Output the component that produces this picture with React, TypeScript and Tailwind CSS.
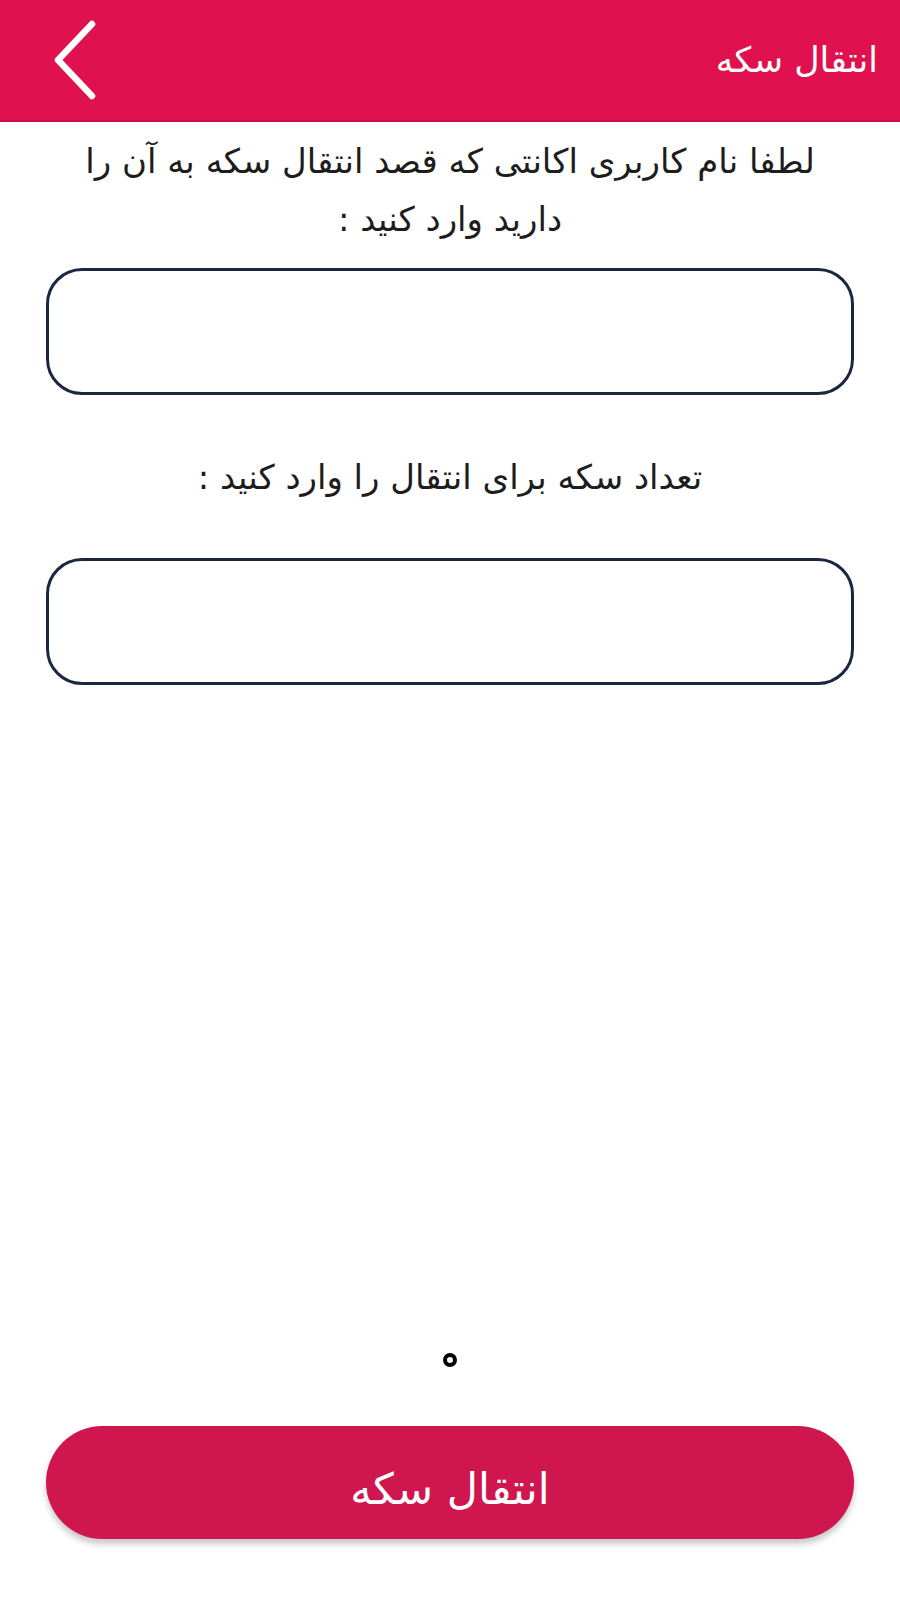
import React, { useState } from 'react';

const fa = { fontFamily: '"DejaVu Sans", "Noto Sans", sans-serif' };

function BackChevron() {
  return (
    <svg width="48" height="80" viewBox="0 0 48 80" fill="none" aria-hidden>
      <polyline
        points="40,4 6,40 40,76"
        stroke="white"
        strokeWidth="6.5"
        strokeLinecap="round"
        strokeLinejoin="round"
      />
    </svg>
  );
}

export default function App() {
  const [username, setUsername] = useState('');
  const [amount, setAmount] = useState('');

  return (
    <div className="flex min-h-[1600px] w-[900px] flex-col bg-white" style={fa}>
      {/* top bar */}
      <header className="flex h-[120px] items-center justify-between bg-[#e0114f] pl-[52px] pr-[22px] shadow-[0_2px_0_#c90e46]">
        <button className="flex items-center" aria-label="back">
          <BackChevron />
        </button>
        <h1 dir="rtl" className="text-[35px] text-white">
          انتقال سکه
        </h1>
      </header>

      <main dir="rtl" className="flex flex-1 flex-col px-[46px] pb-[61px]">
        <p className="mt-[12px] text-center text-[34px] leading-[58px] text-[#1d1d1d]">
          لطفا نام کاربری اکانتی که قصد انتقال سکه به آن را
          <br />
          دارید وارد کنید :
        </p>
        <input
          value={username}
          onChange={(e) => setUsername(e.target.value)}
          className="mt-[20px] h-[127px] w-full rounded-[36px] border-[3px] border-[#1b2640] bg-white px-6 text-[30px] outline-none"
        />

        <p className="mt-[53px] text-center text-[34px] leading-[58px] text-[#1d1d1d]">
          تعداد سکه برای انتقال را وارد کنید :
        </p>
        <input
          value={amount}
          onChange={(e) => setAmount(e.target.value)}
          inputMode="numeric"
          className="mt-[52px] h-[127px] w-full rounded-[36px] border-[3px] border-[#1b2640] bg-white px-6 text-[30px] outline-none"
        />

        <div className="flex-1" />

        <div className="mx-auto h-[14px] w-[14px] rounded-full border-[4px] border-black" />

        <button className="mt-[59px] h-[113px] w-full rounded-full bg-[#d0164f] pt-[14px] text-[43px] text-white shadow-[0_5px_6px_rgba(0,0,0,0.22)]">
          انتقال سکه
        </button>
      </main>
    </div>
  );
}
